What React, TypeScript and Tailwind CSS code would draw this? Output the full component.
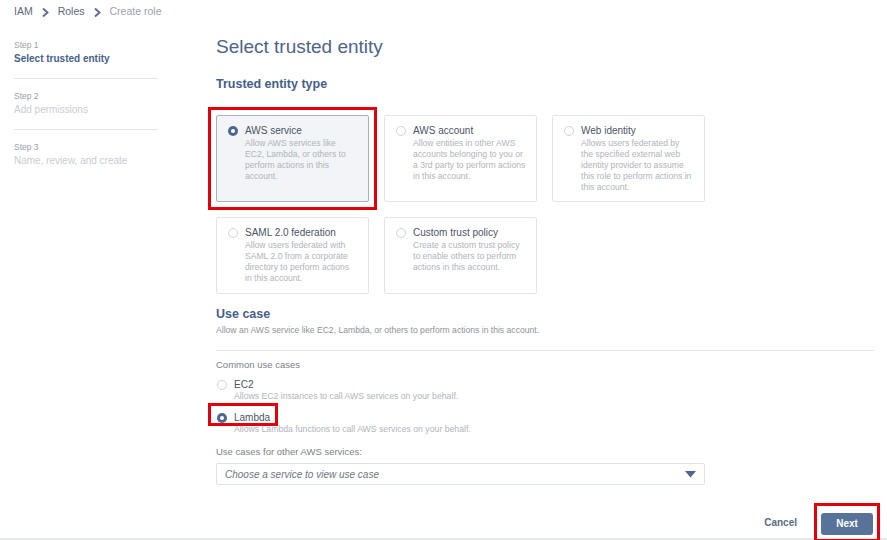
function Chevron() {
  return (
    <svg width="9" height="11" viewBox="0 0 9 11" className="mx-[8px]">
      <path d="M2 1.5 L6.5 5.5 L2 9.5" fill="none" stroke="#5b6f8c" strokeWidth="1.9" />
    </svg>
  )
}

function Radio({ on }: { on?: boolean }) {
  if (on) {
    return (
      <span className="mt-[1px] flex h-[10px] w-[10px] shrink-0 items-center justify-center rounded-full bg-[#4d6890]">
        <span className="h-[4px] w-[4px] rounded-full bg-white" />
      </span>
    )
  }
  return <span className="mt-[1px] block h-[10px] w-[10px] shrink-0 rounded-full border border-[#d0d4d9] bg-white" />
}

// red annotation frame drawn over an element
function Mark({ className }: { className: string }) {
  return <span className={'pointer-events-none absolute z-10 border-[3px] border-[#e4000b] ' + className} />
}

type Entity = { title: string; lines: string[]; on?: boolean }

const row1: Entity[] = [
  {
    title: 'AWS service',
    lines: ['Allow AWS services like', 'EC2, Lambda, or others to', 'perform actions in this', 'account.'],
    on: true,
  },
  {
    title: 'AWS account',
    lines: ['Allow entities in other AWS', 'accounts belonging to you or', 'a 3rd party to perform actions', 'in this account.'],
  },
  {
    title: 'Web identity',
    lines: ['Allows users federated by', 'the specified external web', 'identity provider to assume', 'this role to perform actions in', 'this account.'],
  },
]

const row2: Entity[] = [
  {
    title: 'SAML 2.0 federation',
    lines: ['Allow users federated with', 'SAML 2.0 from a corporate', 'directory to perform actions', 'in this account.'],
  },
  {
    title: 'Custom trust policy',
    lines: ['Create a custom trust policy', 'to enable others to perform', 'actions in this account.'],
  },
]

function Card({ e, h }: { e: Entity; h: string }) {
  return (
    <div
      className={
        'relative flex w-[153px] gap-[7px] rounded-[2px] border pl-[11px] pr-[6px] pt-[9px] ' +
        h +
        (e.on ? ' border-[#a9b3bf] bg-[#f2f4f7]' : ' border-[#e3e5e8] bg-white')
      }
    >
      <Radio on={e.on} />
      <div>
        <div className="text-[10px] leading-[12px] text-[#4a5566]">{e.title}</div>
        <div className="mt-[1px] whitespace-nowrap text-[8.6px] leading-[11px] text-[#b0b4ba]">
          {e.lines.map((l) => (
            <div key={l}>{l}</div>
          ))}
        </div>
      </div>
      {e.on && <Mark className="-left-[9px] -right-[9px] -top-[9px] -bottom-[9px]" />}
    </div>
  )
}

export default function App() {
  return (
    <div className="relative h-[540px] w-[887px] overflow-hidden bg-white font-['Liberation_Sans',Arial,sans-serif]">
      <div className="absolute bottom-0 left-0 h-[2px] w-full bg-[#e6e8eb]" />
      <div className="flex">
        {/* left steps */}
        <div className="w-[216px] shrink-0 pl-[14px]">
          <div className="flex h-[23px] items-center pt-[1px] text-[10.5px] text-[#5b6a80]">
            <span>IAM</span>
            <Chevron />
            <span>Roles</span>
            <Chevron />
            <span className="text-[#9aa1ab]">Create role</span>
          </div>
          <div className="w-[144px]">
            <div className="mt-[17px] text-[8.5px] leading-[11px] text-[#9aa0a8]">Step 1</div>
            <div className="mt-[2px] text-[10px] font-bold leading-[12px] text-[#45618a]">Select trusted entity</div>
            <div className="mt-[13px] h-px bg-[#e3e5e8]" />
            <div className="mt-[12px] text-[8.5px] leading-[11px] text-[#9aa0a8]">Step 2</div>
            <div className="mt-[2px] text-[10px] leading-[12px] text-[#c9ccd1]">Add permissions</div>
            <div className="mt-[13px] h-px bg-[#e3e5e8]" />
            <div className="mt-[12px] text-[8.5px] leading-[11px] text-[#9aa0a8]">Step 3</div>
            <div className="mt-[2px] text-[10px] leading-[12px] text-[#c9ccd1]">Name, review, and create</div>
          </div>
        </div>

        {/* main */}
        <div className="w-[658px] pt-[36px]">
          <h1 className="text-[19px] leading-[22px] text-[#4e6488]">Select trusted entity</h1>
          <h2 className="mt-[18px] text-[12.5px] font-bold leading-[16px] text-[#44608a]">Trusted entity type</h2>

          <div className="mt-[23px] flex gap-[15px]">
            {row1.map((e) => (
              <Card key={e.title} e={e} h="h-[87px]" />
            ))}
          </div>
          <div className="mt-[15px] flex gap-[15px]">
            {row2.map((e) => (
              <Card key={e.title} e={e} h="h-[77px]" />
            ))}
          </div>

          <h2 className="mt-[12px] text-[12.5px] font-bold leading-[16px] text-[#44608a]">Use case</h2>
          <div className="mt-[3px] text-[8.6px] leading-[11px] text-[#8d939b]">
            Allow an AWS service like EC2, Lambda, or others to perform actions in this account.
          </div>
          <div className="mt-[14px] h-px bg-[#e3e5e8]" />

          <div className="mt-[8px] text-[9.5px] leading-[12px] text-[#7b818a]">Common use cases</div>
          <div className="mt-[8px] flex items-start gap-[7px] pl-[1px]">
            <Radio />
            <div>
              <div className="text-[10px] leading-[12px] text-[#4a5566]">EC2</div>
              <div className="text-[8.7px] leading-[11px] text-[#b0b4ba]">Allows EC2 instances to call AWS services on your behalf.</div>
            </div>
          </div>
          <div className="relative mt-[10px] flex items-start gap-[7px] pl-[1px]">
            <Radio on />
            <div>
              <div className="text-[10px] leading-[12px] text-[#4a5566]">Lambda</div>
              <div className="text-[8.7px] leading-[11px] text-[#b0b4ba]">Allows Lambda functions to call AWS services on your behalf.</div>
            </div>
            <Mark className="left-[-8px] top-[-9px] h-[23px] w-[70px]" />
          </div>

          <div className="mt-[11px] text-[9.5px] leading-[12px] text-[#7b818a]">Use cases for other AWS services:</div>
          <div className="mt-[5px] flex h-[22px] w-[489px] items-center justify-between rounded-[2px] border border-[#dfe2e6] pl-[8px] pr-[8px]">
            <span className="text-[10px] italic text-[#6e7580]">Choose a service to view use case</span>
            <svg width="11" height="7" viewBox="0 0 11 7">
              <path d="M0 0 H11 L5.5 6.5 Z" fill="#4d6890" />
            </svg>
          </div>

          <div className="mt-[25px] flex items-center justify-end gap-[24px] pr-[1px]">
            <span className="text-[10px] font-bold text-[#5a6b82]">Cancel</span>
            <div className="relative">
              <button className="h-[22px] w-[52px] rounded-[3px] bg-[#58739a] text-[10px] font-bold text-white">Next</button>
              <Mark className="-left-[7px] -right-[7px] -top-[7px] -bottom-[7px]" />
            </div>
          </div>
        </div>
      </div>
    </div>
  )
}
